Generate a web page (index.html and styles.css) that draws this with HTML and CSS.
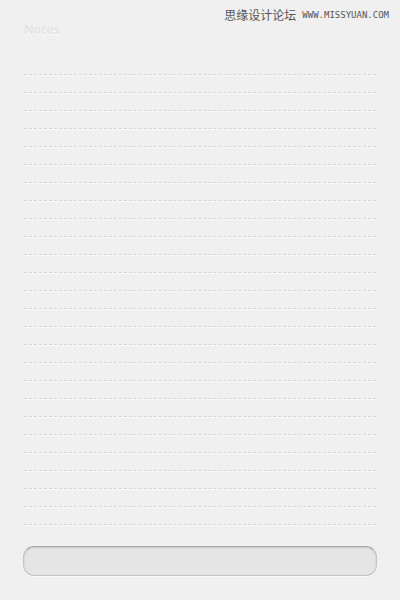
FILE: index.html
```html
<!DOCTYPE html>
<html lang="en">
  <head>
    <meta charset="UTF-8" />
    <meta name="viewport" content="width=device-width, initial-scale=1.0" />
    <title>Notes</title>
    <link rel="stylesheet" href="styles.css">
  </head>
  <body>
    <div class="watermark">
      <span class="wm-cn">思缘设计论坛</span>
      <span class="wm-url">WWW.MISSYUAN.COM</span>
    </div>
    <main class="notes">
      <h1 class="notes-title">Notes</h1>
      <ul class="lines">
        <li></li><li></li><li></li><li></li><li></li><li></li>
        <li></li><li></li><li></li><li></li><li></li><li></li>
        <li></li><li></li><li></li><li></li><li></li><li></li>
        <li></li><li></li><li></li><li></li><li></li><li></li>
        <li></li><li></li>
      </ul>
      <div class="entry"></div>
    </main>
  </body>
</html>
```

FILE: styles.css
```css
* {
  padding: 0;
  margin: 0;
  box-sizing: border-box;
}
html {
  font-family: "Open Sans", "Liberation Sans", sans-serif;
}
body {
  background-color: #f0f0f0;
  width: 400px;
  height: 600px;
  overflow: hidden;
  position: relative;
}
.watermark {
  position: absolute;
  top: 6px;
  right: 11px;
  display: flex;
  align-items: center;
  gap: 6px;
  color: #555;
}
.wm-cn {
  font-family: "Noto Sans CJK SC", sans-serif;
  font-size: 12px;
}
.wm-url {
  font-family: "DejaVu Sans Mono", monospace;
  font-size: 9px;
  padding-top: 1px;
}
.notes {
  padding: 21px 24px 0;
}
.notes-title {
  font-size: 12px;
  font-weight: bold;
  color: #e4e4e4;
  text-shadow: 0 1px 0 #fafafa;
  line-height: 18px;
  height: 18px;
}
.lines {
  list-style: none;
  margin-top: 18px;
}
.lines li {
  height: 18px;
  border-bottom: 1px dashed #d6d6d6;
  box-shadow: 0 1px 0 #f8f8f8;
}
.entry {
  margin: 21px -1px 0;
  height: 30px;
  border-radius: 11px;
  background: #e5e5e5;
  border: 1px solid #c4c4c4;
  border-top-color: #a8a8a8;
  box-shadow: inset 0 1px 2px rgba(0, 0, 0, 0.12), 0 1px 0 #fbfbfb;
}
```
